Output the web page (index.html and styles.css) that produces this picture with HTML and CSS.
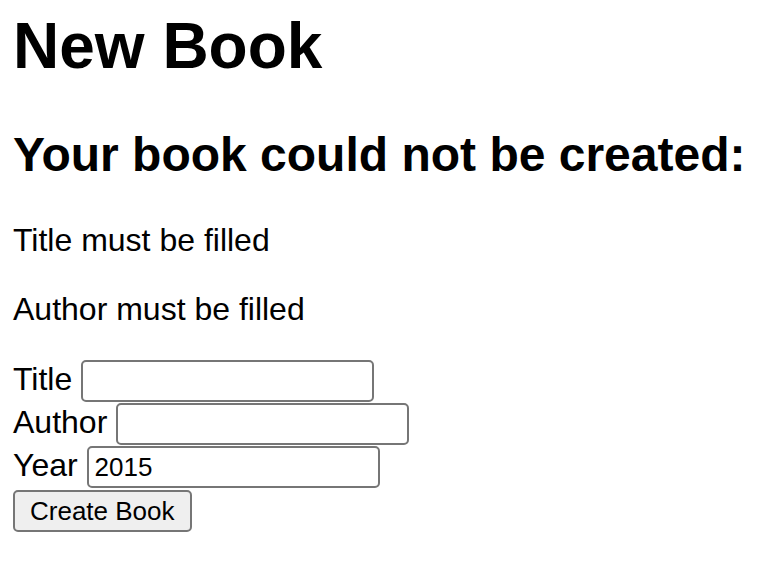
FILE: index.html
```html
<!DOCTYPE html>
<html lang="en">
<head>
<meta charset="utf-8">
<title>New Book</title>
<link rel="stylesheet" href="styles.css">
</head>
<body>
<h1 class="title">New Book</h1>
<h2 class="error-title">Your book could not be created:</h2>
<p class="error">Title must be filled</p>
<p class="error">Author must be filled</p>
<form class="book-form">
<label for="title">Title</label> <input type="text" id="title" class="field"><br>
<label for="author">Author</label> <input type="text" id="author" class="field"><br>
<label for="year">Year</label> <input type="text" id="year" class="field" value="2015"><br>
<button type="submit" class="submit">Create Book</button>
</form>
</body>
</html>
```
FILE: styles.css
```css
html, body {
  margin: 0;
  padding: 0;
  background: #fff;
}
body {
  padding: 9px 0 0 13px;
  font-family: "Liberation Sans", Arial, Helvetica, sans-serif;
  font-size: 32px;
  color: #000;
}
.title {
  font-size: 64px;
  font-weight: bold;
  margin: 0 0 44px;
}
.error-title {
  font-size: 48px;
  font-weight: bold;
  margin: 0 0 40px;
}
.error {
  margin: 0 0 32px;
}
.book-form {
  margin: 0;
}
.field {
  box-sizing: border-box;
  width: 293px;
  height: 42px;
  margin: 0 0 1px;
  padding: 0 6px;
  border: 2px solid #767676;
  border-radius: 5px;
  font-family: "Liberation Sans", Arial, sans-serif;
  font-size: 26px;
  color: #000;
  background: #fff;
  vertical-align: baseline;
}
.submit {
  box-sizing: border-box;
  height: 42px;
  margin: 1px 0 0;
  padding: 0 15px;
  border: 2px solid #767676;
  border-radius: 5px;
  background: #efefef;
  font-family: "Liberation Sans", Arial, sans-serif;
  font-size: 26px;
  color: #000;
}
```
